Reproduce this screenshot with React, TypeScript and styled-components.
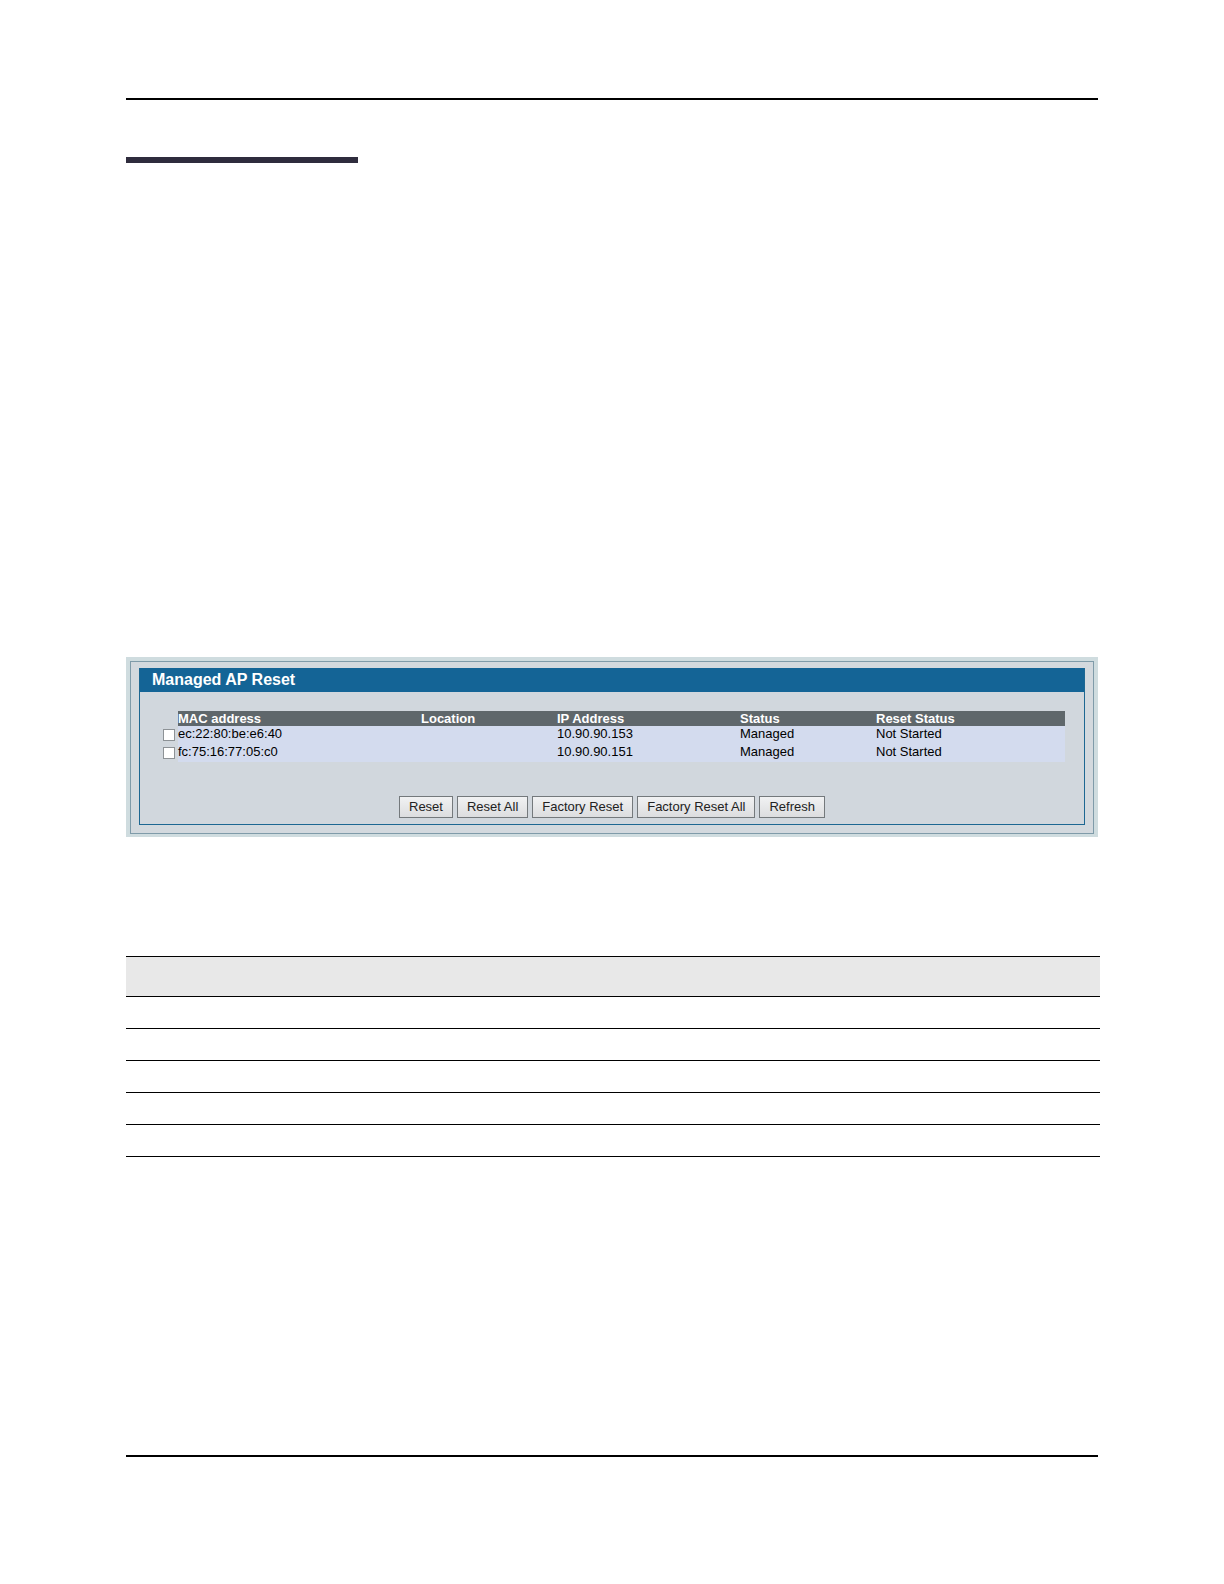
import React, { useState } from "react";
import styled, { createGlobalStyle } from "styled-components";

const GlobalStyle = createGlobalStyle`
  *, *::before, *::after { box-sizing: border-box; }
  body {
    margin: 0;
    background: #fff;
    color: #000;
    font-family: "Liberation Sans", Arial, Helvetica, sans-serif;
    font-size: 13px;
  }
`;

const Page = styled.div`
  display: flex;
  flex-direction: column;
  min-height: 100vh;
  padding: 98px 126px 127px;
`;

const Rule = styled.hr`
  width: 100%;
  height: 2px;
  margin: 0;
  border: 0;
  background: #000;
`;

const SectionBar = styled.div`
  width: 232px;
  height: 6px;
  margin-top: 57px;
  background: #2f2c3d;
`;

const Main = styled.main`
  display: flex;
  flex-direction: column;
  flex: 1;
  padding-top: 494px;
`;

const Frame = styled.section`
  padding: 4px 4px 3px;
  background: #cfdcdf;
`;

const FrameLine = styled.div`
  padding: 6px 8px 8px;
  border: 1px solid #7f9ba9;
  background: #d3d9de;
`;

const Panel = styled.form`
  border: 1px solid #1d6792;
  border-top: 0;
  background: #d1d7dd;
`;

const PanelTitle = styled.h2`
  margin: 0;
  padding: 0 12px;
  background: #146496;
  color: #fff;
  font-size: 16px;
  font-weight: 700;
  line-height: 24px;
`;

const PanelBody = styled.div`
  padding: 19px 19px 6px 23px;
`;

const ApTable = styled.table`
  width: 100%;
  table-layout: fixed;
  border-collapse: collapse;
`;

const Col = styled.col<{ $width?: number }>`
  width: ${({ $width }) => ($width ? `${$width}px` : "auto")};
`;

const HeadCell = styled.th`
  height: 15px;
  padding: 0;
  background: #5f676b;
  color: #fff;
  font-weight: 700;
  line-height: 15px;
  text-align: left;
`;

const Cell = styled.td`
  height: 18px;
  padding: 0;
  background: #d3dbee;
  line-height: 15px;
  vertical-align: top;
`;

const PlainCell = styled.td`
  padding: 0;
  vertical-align: top;
`;

const Check = styled.input`
  display: block;
  appearance: none;
  width: 12px;
  height: 12px;
  margin: 3px 0 0;
  border: 1px solid #8d9296;
  background: #fff;
  &:checked { background: #146496; box-shadow: inset 0 0 0 2px #fff; }
`;

const Actions = styled.div`
  display: flex;
  justify-content: center;
  gap: 4px;
  margin-top: 34px;
  padding-right: 4px;
`;

const Button = styled.button`
  height: 22px;
  padding: 0 9px;
  border: 1px solid #74797c;
  background: linear-gradient(#f1f2f3, #dcdddf);
  color: #222;
  font: 13px/20px "Liberation Sans", Arial, sans-serif;
`;

const FieldTable = styled.table`
  width: calc(100% + 2px);
  margin-top: 119px;
  border-collapse: separate;
  border-spacing: 0;
  border-top: 1px solid #000;
`;

const FieldHead = styled.th`
  height: 40px;
  padding: 0;
  border-bottom: 1px solid #000;
  background: #e8e8e8;
`;

const FieldCell = styled.td`
  height: 32px;
  padding: 0;
  border-bottom: 1px solid #000;
`;

const accessPoints = [
  { mac: "ec:22:80:be:e6:40", location: "", ip: "10.90.90.153", status: "Managed", reset: "Not Started" },
  { mac: "fc:75:16:77:05:c0", location: "", ip: "10.90.90.151", status: "Managed", reset: "Not Started" },
];

const columns = ["MAC address", "Location", "IP Address", "Status", "Reset Status"];
const actions = ["Reset", "Reset All", "Factory Reset", "Factory Reset All", "Refresh"];
const fieldRows = [1, 2, 3, 4, 5];

export default function App() {
  const [selected, setSelected] = useState<string[]>([]);
  const toggle = (mac: string) =>
    setSelected((now) => (now.includes(mac) ? now.filter((m) => m !== mac) : [...now, mac]));

  return (
    <>
      <GlobalStyle />
      <Page>
        <Rule />
        <SectionBar />
        <Main>
          <Frame>
            <FrameLine>
              <Panel onSubmit={(e) => e.preventDefault()}>
                <PanelTitle>Managed AP Reset</PanelTitle>
                <PanelBody>
                  <ApTable>
                    <colgroup>
                      <Col $width={15} />
                      <Col $width={243} />
                      <Col $width={136} />
                      <Col $width={183} />
                      <Col $width={136} />
                      <Col />
                    </colgroup>
                    <thead>
                      <tr>
                        <PlainCell />
                        {columns.map((name) => (
                          <HeadCell key={name} scope="col">{name}</HeadCell>
                        ))}
                      </tr>
                    </thead>
                    <tbody>
                      {accessPoints.map((ap) => (
                        <tr key={ap.mac}>
                          <PlainCell>
                            <Check
                              type="checkbox"
                              id={ap.mac}
                              checked={selected.includes(ap.mac)}
                              onChange={() => toggle(ap.mac)}
                            />
                          </PlainCell>
                          <Cell><label htmlFor={ap.mac}>{ap.mac}</label></Cell>
                          <Cell>{ap.location}</Cell>
                          <Cell>{ap.ip}</Cell>
                          <Cell>{ap.status}</Cell>
                          <Cell>{ap.reset}</Cell>
                        </tr>
                      ))}
                    </tbody>
                  </ApTable>
                  <Actions>
                    {actions.map((name) => (
                      <Button key={name} type="button">{name}</Button>
                    ))}
                  </Actions>
                </PanelBody>
              </Panel>
            </FrameLine>
          </Frame>
          <FieldTable>
            <thead>
              <tr><FieldHead /><FieldHead /></tr>
            </thead>
            <tbody>
              {fieldRows.map((row) => (
                <tr key={row}><FieldCell /><FieldCell /></tr>
              ))}
            </tbody>
          </FieldTable>
        </Main>
        <Rule />
      </Page>
    </>
  );
}
